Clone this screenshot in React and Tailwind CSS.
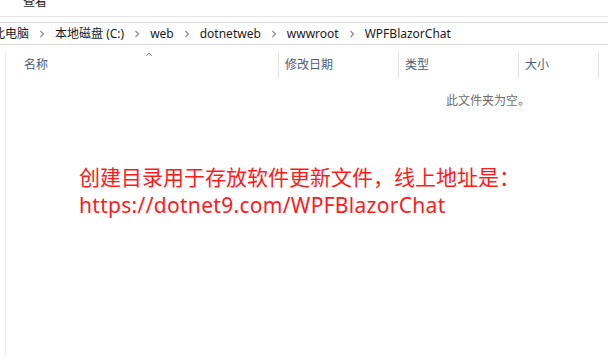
import React from 'react';

const crumbs = ['此电脑', '本地磁盘 (C:)', 'web', 'dotnetweb', 'wwwroot', 'WPFBlazorChat'];

const columns = [
  { label: '名称', width: 'w-[273px]', pad: 'pl-[18px]' },
  { label: '修改日期', width: 'w-[120px]', pad: 'pl-[6px]' },
  { label: '类型', width: 'w-[120px]', pad: 'pl-[6px]' },
  { label: '大小', width: 'w-[80px]', pad: 'pl-[6px]' },
];

const Chevron = () => (
  <svg width="6" height="8" viewBox="0 0 6 8" className="shrink-0">
    <polyline points="1.5,1 4.5,4 1.5,7" fill="none" stroke="#8a8a8a" strokeWidth="1.2" />
  </svg>
);

const App = () => {
  return (
    <div className="w-[608px] h-[358px] bg-white overflow-hidden font-['Noto_Sans','Noto_Sans_CJK_SC',sans-serif] text-[12px] text-[#1a1a1a]">
      {/* ribbon tab */}
      <div className="h-[17px] border-b border-[#e3e3e3] overflow-hidden">
        <div className="pl-[23px] -mt-[5px] leading-[14px]">查看</div>
      </div>

      {/* address bar */}
      <div className="mt-[5px] h-[23px] border-y border-[#d9d9d9] flex items-center -ml-[7px] gap-[10px] leading-[14px]">
        {crumbs.map((c, i) => (
          <React.Fragment key={c}>
            {i > 0 && <Chevron />}
            <span className="whitespace-nowrap">{c}</span>
          </React.Fragment>
        ))}
      </div>

      <div className="flex h-[312px]">
        {/* nav pane edge */}
        <div className="w-[6px] border-r border-[#f0f0f0] mt-[6px]" />

        <div className="flex-1">
          {/* column headers */}
          <div className="flex mt-[7px] h-[26px] text-[#4c607a] relative">
            {columns.map((col) => (
              <div
                key={col.label}
                className={`${col.width} ${col.pad} h-full flex items-center border-r border-[#e5e5e5] shrink-0`}
              >
                {col.label}
              </div>
            ))}
            <svg width="8" height="5" viewBox="0 0 8 5" className="absolute left-[139px] top-[0px]">
              <polyline points="1,4 4,1 7,4" fill="none" stroke="#8a8a8a" strokeWidth="1" />
            </svg>
          </div>

          <div className="pl-[440px] mt-[16px] text-[#6d6d6d] leading-[14px]">此文件夹为空。</div>

          {/* annotation */}
          <div className="pl-[73px] mt-[55px] text-[21px] leading-[28px] text-[#ff1a1a]">
            <div className="whitespace-nowrap">创建目录用于存放软件更新文件，线上地址是：</div>
            <div className="whitespace-nowrap tracking-[0.3px]">https://dotnet9.com/WPFBlazorChat</div>
          </div>
        </div>
      </div>
    </div>
  );
};

export default App;
